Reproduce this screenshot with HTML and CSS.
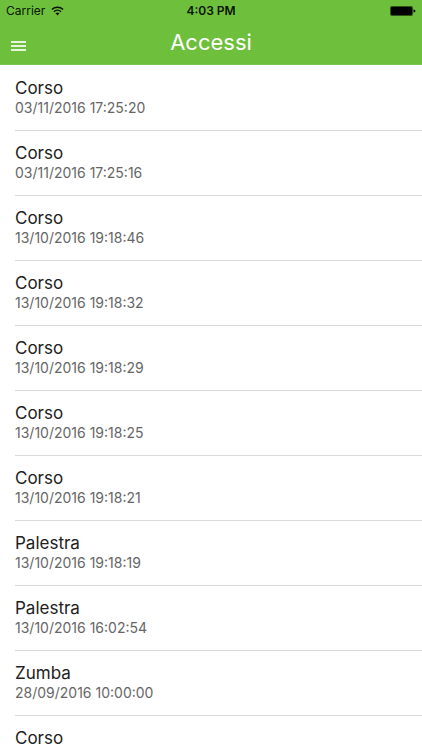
FILE: index.html
```html
<!DOCTYPE html>
<html lang="it">
<head>
<meta charset="utf-8">
<meta name="viewport" content="width=device-width, initial-scale=1">
<title>Accessi</title>
<link rel="stylesheet" href="styles.css">
</head>
<body>
<header class="header">
  <div class="status">
    <div class="status-carrier">
      <span>Carrier</span>
      <svg class="wifi" viewBox="0 0 13 10" aria-hidden="true">
        <path d="M.9 3.5a8.2 8.2 0 0 1 11.2 0M2.9 5.7a5.3 5.3 0 0 1 7.2 0" fill="none" stroke="currentColor" stroke-width="1.5"/>
        <path d="M4.5 7.3a3 3 0 0 1 4 0L6.5 9.4z" fill="currentColor"/>
      </svg>
    </div>
    <time class="status-time">4:03 PM</time>
    <svg class="battery" viewBox="0 0 26 10" aria-hidden="true">
      <rect x="0" y="0" width="23" height="10" rx="2" fill="#2c5415"/>
      <rect x="1" y="1" width="21" height="8" rx="1" fill="#000"/>
      <path d="M23.5 3.5q2 .3 2 1.5t-2 1.5z" fill="#000"/>
    </svg>
  </div>
  <div class="navbar">
    <button class="menu" type="button" aria-label="Menu">
      <svg class="menu-icon" viewBox="0 0 15 12" aria-hidden="true">
        <path d="M0 2h15M0 6h15M0 10h15" stroke="currentColor" stroke-width="1.9"/>
      </svg>
    </button>
    <h1 class="title">Accessi</h1>
  </div>
</header>
<main>
  <ul class="list">
    <li class="item"><span class="name">Corso</span><time class="date">03/11/2016 17:25:20</time></li>
    <li class="item"><span class="name">Corso</span><time class="date">03/11/2016 17:25:16</time></li>
    <li class="item"><span class="name">Corso</span><time class="date">13/10/2016 19:18:46</time></li>
    <li class="item"><span class="name">Corso</span><time class="date">13/10/2016 19:18:32</time></li>
    <li class="item"><span class="name">Corso</span><time class="date">13/10/2016 19:18:29</time></li>
    <li class="item"><span class="name">Corso</span><time class="date">13/10/2016 19:18:25</time></li>
    <li class="item"><span class="name">Corso</span><time class="date">13/10/2016 19:18:21</time></li>
    <li class="item"><span class="name">Palestra</span><time class="date">13/10/2016 19:18:19</time></li>
    <li class="item"><span class="name">Palestra</span><time class="date">13/10/2016 16:02:54</time></li>
    <li class="item"><span class="name">Zumba</span><time class="date">28/09/2016 10:00:00</time></li>
    <li class="item"><span class="name">Corso</span></li>
  </ul>
</main>
</body>
</html>
```
FILE: styles.css
```css
* {
  box-sizing: border-box;
}

html,
body {
  height: 100%;
}

body {
  margin: 0;
  display: flex;
  flex-direction: column;
  overflow: hidden;
  background: #fff;
  color: #212121;
  font-family: Inter, Roboto, sans-serif;
}

.header {
  flex: none;
  background: #6ec03c;
  border-bottom: 1px solid #7cc64f;
}

.status {
  display: grid;
  grid-template-columns: 1fr auto 1fr;
  align-items: center;
  height: 22px;
  padding: 0 6px;
  color: #0a1403;
  font-size: 12px;
  line-height: 22px;
}

.status-carrier {
  display: flex;
  align-items: center;
  gap: 6px;
}

.wifi {
  width: 13px;
  height: 10px;
}

.status-time {
  font-weight: 600;
}

.battery {
  justify-self: end;
  width: 26px;
  height: 10px;
}

.navbar {
  display: grid;
  grid-template-columns: 48px 1fr 48px;
  align-items: start;
  height: 42px;
  color: #fff;
}

.menu {
  display: flex;
  align-items: center;
  height: 42px;
  margin: 0;
  padding: 6px 0 0 11px;
  border: 0;
  background: none;
  color: #e6f6dc;
}

.menu-icon {
  width: 15px;
  height: 12px;
}

.title {
  margin: 0;
  font-size: 22px;
  font-weight: 400;
  line-height: 40px;
  text-align: center;
}

.list {
  margin: 0;
  padding: 1px 0 0 15px;
  list-style: none;
}

.item {
  display: flex;
  flex-direction: column;
  padding: 12px 0;
  border-bottom: 1px solid #d9d9d9;
}

.name {
  font-size: 17px;
  line-height: 20px;
}

.date {
  color: #666;
  font-size: 14px;
  line-height: 20px;
}
```
